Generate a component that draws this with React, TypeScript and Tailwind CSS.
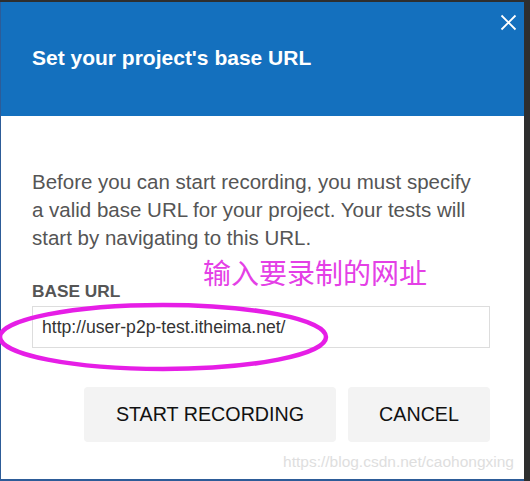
import React from 'react';

const App: React.FC = () => {
  return (
    <div className="w-[530px] h-[481px] bg-[#2e2e2e] pt-[2px] overflow-hidden font-['Liberation_Sans',Arial,sans-serif]">
      <div className="relative w-[524px] h-[479px] bg-white border-l border-b-2 border-[#2d5c98] flex flex-col">
        <header className="h-[114px] bg-[#1470be] flex items-center pl-[31px] pb-[2px] relative shrink-0">
          <h2 className="text-[21px] font-bold text-white">Set your project's base URL</h2>
          <button className="absolute right-[6px] top-[10px] w-[20px] h-[20px] flex items-center justify-center">
            <svg width="17" height="17" viewBox="0 0 17 17" fill="none" stroke="white" strokeWidth="1.8">
              <path d="M1.5 1.5 L15.5 15.5 M15.5 1.5 L1.5 15.5" />
            </svg>
          </button>
        </header>

        <div className="pl-[31px] pr-[34px] pt-[52px] flex flex-col">
          <p className="w-[448px] text-[20.5px] leading-[28px] text-[#555]">
            Before you can start recording, you must specify a valid base URL for your project. Your tests will
            start by navigating to this URL.
          </p>

          <div className="relative mt-[29px] h-[20px]">
            <p className="absolute left-[171px] top-[-26px] text-[28px] leading-[34px] text-[#e440e6] font-['Noto_Sans_CJK_SC',sans-serif]">
              输入要录制的网址
            </p>
            <p className="text-[17.3px] leading-[20px] font-bold text-[#555]">BASE URL</p>
          </div>

          <div className="mt-[5px] h-[42px] border border-[#dddddd] flex items-center pl-[9px] text-[17.6px] text-[#333]">
            http://user-p2p-test.itheima.net/
          </div>

          <div className="mt-[39px] flex justify-end gap-[12px]">
            <button className="w-[252px] h-[55px] bg-[#f3f3f3] rounded-[4px] text-[19.7px] text-[#111]">START RECORDING</button>
            <button className="w-[142px] h-[55px] bg-[#f3f3f3] rounded-[4px] text-[19.7px] text-[#111]">CANCEL</button>
          </div>
        </div>

        <p className="absolute right-[10px] bottom-[6px] text-[15.5px] text-[#dedede]">https://blog.csdn.net/caohongxing</p>

        <svg className="absolute left-[-4px] top-[298px] pointer-events-none" width="340" height="74" viewBox="0 0 340 74">
          <ellipse cx="166" cy="37" rx="163" ry="32" fill="none" stroke="#e61ee6" strokeWidth="4.5" />
        </svg>
      </div>
    </div>
  );
};

export default App;
